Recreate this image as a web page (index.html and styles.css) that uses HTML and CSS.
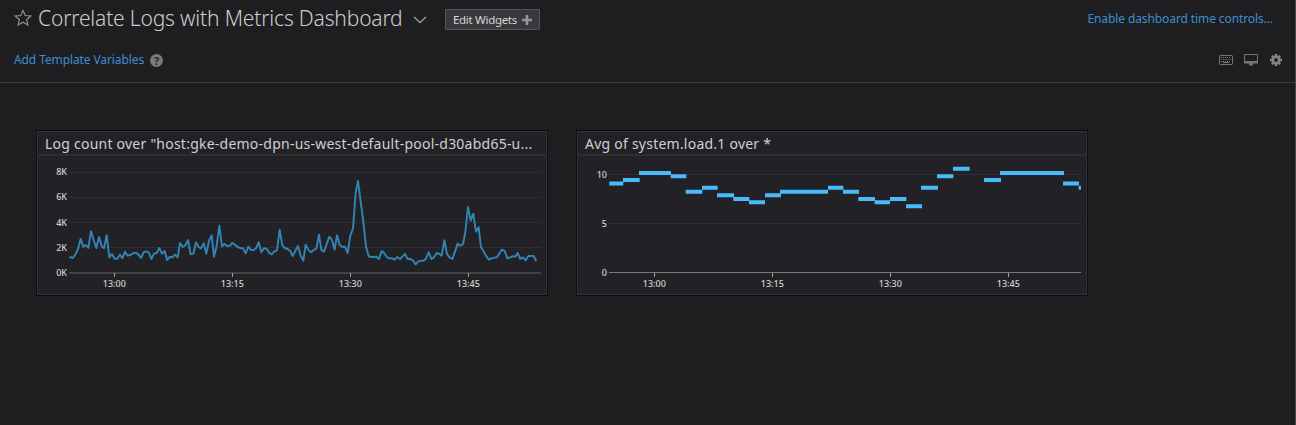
FILE: index.html
```html
<!DOCTYPE html>
<html lang="en">
<head>
<meta charset="utf-8">
<title>Correlate Logs with Metrics Dashboard</title>
<link rel="stylesheet" href="styles.css">
</head>
<body>
<header class="header">
  <div class="title-row">
    <svg class="star" width="18" height="18" viewBox="0 0 18 18"><path d="M9 1.4 11.2 6.5 16.8 7 12.6 10.7 13.9 16.1 9 13.3 4.1 16.1 5.4 10.7 1.2 7 6.8 6.5Z"/></svg>
    <h1 class="title">Correlate Logs with Metrics Dashboard</h1>
    <svg class="chevron" width="14" height="8" viewBox="0 0 14 8"><path d="M1 1 7 6.6 13 1"/></svg>
    <button class="edit">Edit Widgets <svg width="10" height="10" viewBox="0 0 10 10"><path d="M5 0V10M0 5H10"/></svg></button>
    <a class="link time">Enable dashboard time controls...</a>
  </div>
  <div class="tools-row">
    <a class="link">Add Template Variables</a>
    <span class="help">?</span>
    <div class="tools">
      <svg width="14" height="10" viewBox="0 0 14 10"><rect class="line" x=".5" y=".5" width="13" height="9" rx=".8"/><path class="keys" d="M2 2.5H12M2.5 4.5H12M2 6.5H12"/><path class="line" d="M4 7.5H10"/></svg>
      <svg width="14" height="12" viewBox="0 0 14 12"><path class="line" d="M.5 .5H13.5V8.500H.5Z"/><path class="solid" d="M0 7H14V9.500H9V11.500H5V9.500H0Z"/></svg>
      <svg width="12" height="12" viewBox="0 0 12 12"><circle class="gear" cx="6" cy="6" r="3.200"/><path class="teeth" d="M6 0V2M6 10V12M0 6H2M10 6H12M1.800 1.800 3.200 3.200M8.800 8.800 10.200 10.200M10.200 1.800 8.800 3.200M3.200 8.800 1.800 10.200"/></svg>
    </div>
  </div>
</header>
<main class="board">
  <section class="widget">
    <h2 class="widget-title">Log count over "host:gke-demo-dpn-us-west-default-pool-d30abd65-u...</h2>
    <svg class="chart" width="508" height="138" viewBox="38 156 508 138">
      <path class="grid" d="M69 172.500H541M69 197.500H541M69 222.500H541M69 247.500H541"/>
      <path class="axis soft" d="M69 273H541"/>
      <path class="tick" d="M114.500 273V277M232.500 273V277M350.500 273V277M468.500 273V277"/>
      <g class="ylabels"><text x="67" y="175">8K</text><text x="67" y="200">6K</text><text x="67" y="226">4K</text><text x="67" y="251">2K</text><text x="67" y="276">0K</text></g>
      <g class="xlabels"><text x="114.300" y="286.500">13:00</text><text x="232.300" y="286.500">13:15</text><text x="350.300" y="286.500">13:30</text><text x="468.300" y="286.500">13:45</text></g>
      <g transform="translate(30 125) scale(.33333)">
        <polyline class="series" points="118,396 128,399 136,389 144,372 152,342 160,365 168,360 175,369 183,319 191,345 199,369 207,336 215,363 222,370 230,331 238,397 246,387 254,401 262,401 270,389 277,400 285,380 293,392 301,390 309,385 317,383 325,388 333,399 341,382 348,379 356,382 364,402 372,386 380,384 388,369 396,386 404,378 411,405 419,396 427,397 435,389 443,397 450,354 458,366 466,361 474,345 482,388 490,386 498,352 506,366 513,370 521,355 529,386 537,347 545,331 552,395 560,362 568,302 576,364 584,357 592,363 600,362 607,354 615,359 623,366 631,369 639,370 647,385 655,365 663,375 671,375 678,370 686,352 694,382 702,370 710,371 718,384 725,388 733,379 741,376 749,314 757,361 765,369 773,372 780,377 788,393 796,378 804,363 812,392 820,407 827,359 835,374 843,382 851,375 859,371 867,329 874,375 882,380 890,357 898,335 906,345 914,374 921,331 929,360 937,366 945,365 953,384 961,332 969,311 977,203 984,168 992,230 1000,290 1008,365 1016,393 1023,396 1031,396 1039,395 1047,402 1055,378 1063,385 1071,397 1078,400 1087,400 1094,404 1102,396 1110,402 1118,394 1125,387 1133,402 1141,402 1149,407 1157,418 1165,409 1173,407 1180,407 1188,401 1196,382 1204,402 1212,397 1220,384 1228,387 1235,392 1243,346 1251,387 1259,398 1267,402 1275,380 1283,356 1291,362 1299,357 1306,322 1314,246 1322,287 1330,266 1338,320 1346,307 1353,367 1361,379 1369,394 1377,404 1385,400 1393,398 1401,397 1409,384 1416,374 1424,378 1432,400 1440,397 1448,394 1456,395 1463,384 1471,402 1479,397 1487,406 1495,393 1503,393 1511,393 1519,409"/>
      </g>
    </svg>
  </section>
  <section class="widget">
    <h2 class="widget-title">Avg of system.load.1 over *</h2>
    <svg class="chart" width="508" height="138" viewBox="38 156 508 138">
      <path class="grid" d="M69 174.500H541M69 223.500H541"/>
      <path class="axis" d="M69 272.500H541"/>
      <path class="tick" d="M114.500 273V277M232.500 273V277M350.500 273V277M468.500 273V277"/>
      <g class="ylabels"><text x="67" y="178">10</text><text x="67" y="227">5</text><text x="67" y="276">0</text></g>
      <g class="xlabels"><text x="114.300" y="286.500">13:00</text><text x="232.300" y="286.500">13:15</text><text x="350.300" y="286.500">13:30</text><text x="468.300" y="286.500">13:45</text></g>
      <g transform="translate(30 125) scale(.33333)">
        <path class="steps" d="M118 175.500H160M159 165H209M207 144H303M302 154H349M347 200H397M396 188H443M441 211H492M490 222H538M537 232H585M585 211H633M630 200H774M774 188H820M819 200H867M865 222H915M914 232H960M960 222H1009M1008 244H1056M1053 188H1104M1101 154H1150M1149 131H1199M1242 165H1293M1290 144H1482M1479 175.500H1527M1526 188H1533"/>
      </g>
    </svg>
  </section>
</main>
</body>
</html>
```
FILE: styles.css
```css
* { box-sizing: border-box; }
body {
  margin: 0;
  height: 425px;
  overflow: hidden;
  background: #1e1e20;
  border-right: 1px solid #48484a;
  color: #cdcdcd;
  font-family: "Noto Sans", sans-serif;
}
.header { height: 83px; border-bottom: 1px solid #3d3d3f; }
.title-row { display: flex; align-items: center; height: 38px; padding: 0 22px 0 14px; }
.star { flex: none; fill: none; stroke: #8f8f91; stroke-width: 1.2; margin: -2px 6px 0 0; }
.title { width: 365px; margin: -2px 0 0; font-size: 21px; letter-spacing: -.17px; line-height: 36px; font-weight: 300; white-space: nowrap; }
.chevron { flex: none; fill: none; stroke: #9b9b9d; stroke-width: 1.4; margin: 2px 18px 0 10px; }
.edit {
  display: flex; align-items: center; justify-content: space-between; flex: none;
  width: 95px; height: 21px; padding: 0 7px;
  margin-top: 1px;
  background: #39393d; border: 1px solid #545457; border-radius: 1px;
  color: #d6d6d6; font: 11.5px "Noto Sans", sans-serif; letter-spacing: -.3px; white-space: nowrap;
}
.edit svg { flex: none; stroke: #98989a; stroke-width: 2.6; }
.link { color: #3d8fd1; font-size: 12px; letter-spacing: -.1px; line-height: 16px; white-space: nowrap; }
.time { margin-left: auto; }
.tools-row { display: flex; align-items: center; height: 44px; padding: 0 13px 0 14px; }
.help {
  width: 13px; height: 13px; margin-left: 6px; border-radius: 50%;
  background: #7b7b7d; color: #1e1e20; font-size: 11px; font-weight: 700;
  line-height: 13px; text-align: center;
}
.tools { display: flex; align-items: center; gap: 11px; margin-left: auto; }
.tools svg:last-child { margin-left: 1px; }
.line { fill: none; stroke: #767678; stroke-width: 1; }
.solid { fill: #767678; }
.keys { fill: none; stroke: #767678; stroke-width: 1; stroke-dasharray: 1 1; }
.gear { fill: none; stroke: #858587; stroke-width: 2.6; }
.teeth { stroke: #858587; stroke-width: 2.4; }
.board { display: flex; gap: 28px; padding: 47px 0 0 36px; }
.widget {
  width: 512px; height: 166px;
  border: 1px solid #0e0e10;
  background: #222226;
  box-shadow: inset 0 0 0 1px #323236;
  padding: 1px;
}
.widget-title {
  margin: 0; height: 24px; padding: 0 7px;
  border-bottom: 2px solid #2e2e33;
  font-size: 14px; letter-spacing: .235px; line-height: 24px; font-weight: 400; color: #d0d0d0; white-space: nowrap;
}
.chart { display: block; }
.grid { stroke: #2e2e32; }
.axis { stroke: #79797c; }
.axis.soft { stroke: #414145; stroke-width: 2; }
.tick { stroke: #a0a0a2; }
.chart text { font-size: 9px; font-weight: 500; fill: #d2d2d2; }
.ylabels { text-anchor: end; }
.xlabels { text-anchor: middle; }
.series { fill: none; stroke: #3185b5; stroke-width: 5.8; stroke-linejoin: round; }
.steps { fill: none; stroke: #48bcfb; stroke-width: 12; }
```
